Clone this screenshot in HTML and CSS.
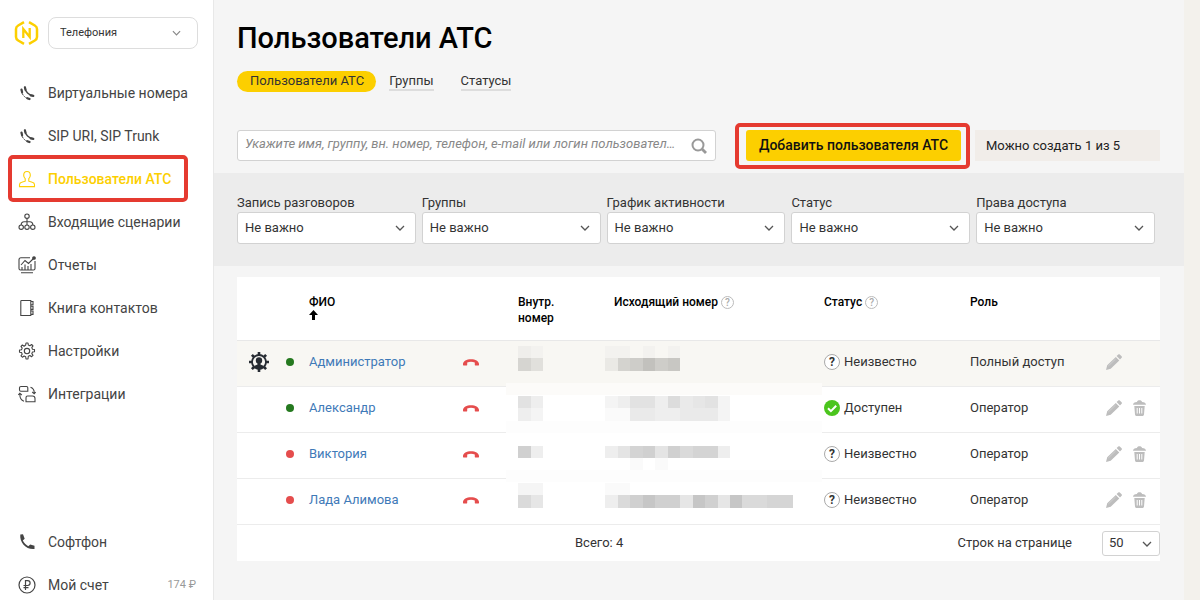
FILE: index.html
```html
<!DOCTYPE html>
<html lang="ru">
<head>
<meta charset="utf-8">
<title>Пользователи АТС</title>
<link rel="stylesheet" href="styles.css">
</head>
<body>
<svg class="defs" aria-hidden="true">
  <symbol id="chevron" viewBox="0 0 10 6"><path d="M1 1l4 4 4-4" fill="none" stroke="currentColor" stroke-width="1.3"/></symbol>
  <symbol id="call" viewBox="0 0 18 18"><path d="M2.300 1.500L5 1.200l1.700 4.500-1.900 1.900c1.300 2.600 3 4.300 5.500 5.600l1.900-1.700 4.300 1.300v3.200c-8 1-15.200-6.200-14.200-14.500z" fill="currentColor"/></symbol>
  <symbol id="numbers" viewBox="0 0 18 18"><g fill="none" stroke="currentColor" stroke-linecap="round"><path d="M3.400 5.500c-.3 4.500 3.700 9 8.200 9.700" stroke-width="1" stroke-dasharray="2 1.500"/><path d="M3.500 5.600l.6 2.600M9.300 14.200l2.300.8" stroke-width="2.200"/><path d="M7 3.200c.2 4.500 3.800 8 8.300 8.400" stroke-width="1.400"/><path d="M6.900 3.300l.6 2.500M12.700 11.300l2.600.5" stroke-width="2.200"/></g></symbol>
  <symbol id="hangup" viewBox="0 0 16 7"><path d="M0 5.200C0 2.300 3.700.3 8 .3s8 2 8 4.900v.9c0 .3-.2.500-.5.500h-3.200c-.3 0-.5-.2-.5-.5V3.600C9.500 2.300 6.500 2.300 4.200 3.600v2.500c0 .3-.2.500-.5.500H.5c-.3 0-.5-.2-.5-.5z" fill="currentColor"/></symbol>
  <symbol id="pencil" viewBox="0 0 16 16"><path d="M0 16l1.200-4.800 8.600-8.300 3.500 3.500-8.600 8.300zM10.600 2.100L12.300.5c.5-.5 1-.5 1.500 0l1.800 1.800c.5.5.5 1 0 1.500L14 5.500z" fill="currentColor"/><path d="M2.300 12l7.300-7" stroke="#dcdcdc" stroke-width=".6"/></symbol>
  <symbol id="trash" viewBox="0 0 13 16"><path d="M4 2c0-2.400 5-2.400 5 0 2.500.3 4 1 4 2.800H0C0 3 1.500 2.300 4 2zM1.300 6h10.400l-.7 8.500c-.1.900-.7 1.500-1.600 1.500H3.600c-.9 0-1.500-.6-1.600-1.500z" fill="currentColor"/><path d="M4.200 8v5.500M6.500 8v5.500M8.800 8v5.500" stroke="#fff" stroke-width="1"/></symbol>
</svg>

<aside class="sidebar">
  <div class="brand">
    <svg class="logo" viewBox="0 0 26 26" fill="none" stroke="#fccf00" stroke-width="2.500" aria-label="Логотип"><path d="M10 2.200L4.200 5.500Q2 6.800 2 9v8q0 2.200 2.200 3.500L10 23.800M15 2.200l5.800 3.300Q23 6.800 23 9v8q0 2.200-2.200 3.500L15 23.800"/><path d="M9.300 18V9l6.400 8V8" stroke-width="2.300"/></svg>
    <div class="select product">
      <select aria-label="Продукт"><option>Телефония</option></select>
      <svg><use href="#chevron"/></svg>
    </div>
  </div>
  <nav class="nav">
    <a href="#"><svg><use href="#numbers"/></svg>Виртуальные номера</a>
    <a href="#"><svg><use href="#numbers"/></svg>SIP URI, SIP Trunk</a>
    <a href="#" class="active highlight" aria-current="page"><svg viewBox="0 0 18 18" fill="none" stroke="currentColor" stroke-width="1.100"><path d="M9 1.500c-2.200 0-3.300 1.500-3.300 3.700 0 1.500.6 2.700 1.500 3.500v2.500l-3.500 1.100c-1.400.4-2.200 1-2.200 2.400v1.900h15v-1.900c0-1.400-.8-2-2.200-2.400l-3.500-1.100V8.700c.9-.8 1.500-2 1.500-3.500 0-2.200-1.100-3.700-3.300-3.700z"/></svg>Пользователи АТС</a>
    <a href="#"><svg viewBox="0 0 18 18" fill="none" stroke="currentColor" stroke-width="1.100"><circle cx="9" cy="3.200" r="2.200"/><circle cx="3.200" cy="14.200" r="2.200"/><circle cx="9" cy="14.200" r="2.200"/><circle cx="14.800" cy="14.200" r="2.200"/><path d="M9 5.400V12M3.200 12c0-2 .8-3.200 3-3.200h5.600c2.200 0 3 1.200 3 3.200"/></svg>Входящие сценарии</a>
    <a href="#"><svg viewBox="0 0 18 18" fill="none" stroke="currentColor" stroke-width="1.100"><path d="M12 1.700H3q-2 0-2 2v8.800q0 1.500 1.500 1.500h13q1.500 0 1.500-1.500V5M3 16.800h12M3 9l4-4.500 3.500 3 5-5"/><circle cx="16" cy="2" r="1.300" fill="currentColor"/><path d="M4 14v-3M7 14V8.500M10 14v-4M13 14V8"/></svg>Отчеты</a>
    <a href="#"><svg viewBox="0 0 18 18" fill="none" stroke="currentColor" stroke-width="1.100"><path d="M3.500 1.500h9.300v15H2.800V2.200q0-.7.700-.7z"/><path d="M13 2.500h2v3.200h-2M13 7.200h2v3.200h-2M13 12h2v3.400h-2"/></svg>Книга контактов</a>
    <a href="#"><svg viewBox="0 0 18 18" fill="none" stroke="currentColor" stroke-width="1.100" stroke-linejoin="round"><path d="M7.700 3L8 1h2l.3 2 1.600.7 1.700-1.200 1.400 1.400-1.200 1.700.7 1.600 2 .3v2.200l-2 .3-.7 1.600 1.200 1.700-1.400 1.400-1.700-1.200-1.600.7L10 17H8l-.3-2.300-1.600-.7-1.700 1.200L3 13.800l1.200-1.700-.7-1.600-2-.3V8l2-.3.700-1.600L3 4.400 4.400 3l1.700 1.200z"/><circle cx="9" cy="9.100" r="2.700"/></svg>Настройки</a>
    <a href="#"><svg viewBox="0 0 18 18" fill="none" stroke="currentColor" stroke-width="1.100"><path d="M3 1.500h5.500q1.300 0 1.300 1.300v3.400H2.800Q1.500 6.200 1.500 5V2.800Q1.500 1.500 3 1.500zM9.500 11h5q2.500 0 2.500 2.500v3.200H8v-4q0-1.700 1.500-1.700zM12.500 2.200q4 1.300 3.700 6M14.200 7l2 1.800L17.700 7M1.800 9q0 6 4.200 7.200M.2 10l1.600-1.800L3.800 10"/></svg>Интеграции</a>
  </nav>
  <nav class="nav nav-bottom">
    <a href="#"><svg><use href="#call"/></svg>Софтфон</a>
    <a href="#"><svg viewBox="0 0 18 18" fill="none" stroke="currentColor" stroke-width="1.200"><circle cx="9" cy="9" r="8"/><path d="M7.500 14V4.700h2.200a2.400 2.400 0 0 1 0 4.800H5.500M5.500 11.600h5"/></svg>Мой счет<span class="balance">174 ₽</span></a>
  </nav>
</aside>

<main class="main">
  <header class="head">
    <h1>Пользователи АТС</h1>
    <nav class="tabs">
      <a href="#" class="current">Пользователи АТС</a>
      <a href="#">Группы</a>
      <a href="#">Статусы</a>
    </nav>
    <div class="actions">
      <form class="search">
        <input type="text" aria-label="Поиск" placeholder="Укажите имя, группу, вн. номер, телефон, e-mail или логин пользовател…">
        <button type="button" aria-label="Найти"><svg viewBox="0 0 16 16" fill="none" stroke="#999"><circle cx="7" cy="7" r="5.500" stroke-width="2"/><path d="M11 11l4 4" stroke-width="2.800"/></svg></button>
      </form>
      <div class="add highlight"><button type="button">Добавить пользователя АТС</button></div>
      <p class="limit">Можно создать 1 из 5</p>
    </div>
  </header>

  <section class="filters">
    <div class="filter"><label for="f1">Запись разговоров</label><div class="select"><select id="f1"><option>Не важно</option></select><svg><use href="#chevron"/></svg></div></div>
    <div class="filter"><label for="f2">Группы</label><div class="select"><select id="f2"><option>Не важно</option></select><svg><use href="#chevron"/></svg></div></div>
    <div class="filter"><label for="f3">График активности</label><div class="select"><select id="f3"><option>Не важно</option></select><svg><use href="#chevron"/></svg></div></div>
    <div class="filter"><label for="f4">Статус</label><div class="select"><select id="f4"><option>Не важно</option></select><svg><use href="#chevron"/></svg></div></div>
    <div class="filter"><label for="f5">Права доступа</label><div class="select"><select id="f5"><option>Не важно</option></select><svg><use href="#chevron"/></svg></div></div>
  </section>

  <section class="card">
    <table class="users">
      <colgroup><col class="c-owner"><col class="c-dot"><col class="c-name"><col class="c-call"><col class="c-ext"><col class="c-out"><col class="c-status"><col class="c-role"><col class="c-tools"></colgroup>
      <thead>
        <tr>
          <th></th><th></th>
          <th>ФИО<svg class="sort" viewBox="0 0 9 10"><path d="M4.500 0L9 5H6v5H3V5H0z"/></svg></th>
          <th></th>
          <th>Внутр.<br>номер</th>
          <th>Исходящий номер <span class="hint">?</span></th>
          <th>Статус <span class="hint">?</span></th>
          <th>Роль</th>
          <th></th>
        </tr>
      </thead>
      <tbody>
        <tr class="owner">
          <td><svg class="gear" viewBox="0 0 20 20"><g stroke="#272c33" stroke-width="2.600"><path d="M10 0v3M10 17v3M0 10h3M17 10h3M2.900 2.900L5 5M15 15l2.100 2.100M2.900 17.100L5 15M15 5l2.100-2.100"/></g><circle cx="10" cy="10" r="7" fill="none" stroke="#272c33" stroke-width="1.800"/><circle cx="10" cy="8.500" r="3.200" fill="#272c33"/><path d="M8.500 10h3v2.500l3.500 1.500-2.500 2.800h-5L5 14l3.500-1.500z" fill="#272c33"/></svg></td>
          <td><span class="dot on"></span></td>
          <td><a href="#">Администратор</a></td>
          <td><svg class="hangup"><use href="#hangup"/></svg></td>
          <td></td><td></td>
          <td><span class="state"><span class="unknown">?</span>Неизвестно</span></td>
          <td>Полный доступ</td>
          <td><div class="tools"><button type="button" aria-label="Изменить"><svg class="pencil"><use href="#pencil"/></svg></button></div></td>
        </tr>
        <tr>
          <td></td>
          <td><span class="dot on"></span></td>
          <td><a href="#">Александр</a></td>
          <td><svg class="hangup"><use href="#hangup"/></svg></td>
          <td></td><td></td>
          <td><span class="state"><svg class="ok" viewBox="0 0 16 16"><circle cx="8" cy="8" r="8" fill="#4bc51d"/><path d="M4 8.200l2.900 2.900 5.300-5.300" fill="none" stroke="#fff" stroke-width="2"/></svg>Доступен</span></td>
          <td>Оператор</td>
          <td><div class="tools"><button type="button" aria-label="Изменить"><svg class="pencil"><use href="#pencil"/></svg></button><button type="button" aria-label="Удалить"><svg class="trash"><use href="#trash"/></svg></button></div></td>
        </tr>
        <tr>
          <td></td>
          <td><span class="dot off"></span></td>
          <td><a href="#">Виктория</a></td>
          <td><svg class="hangup"><use href="#hangup"/></svg></td>
          <td></td><td></td>
          <td><span class="state"><span class="unknown">?</span>Неизвестно</span></td>
          <td>Оператор</td>
          <td><div class="tools"><button type="button" aria-label="Изменить"><svg class="pencil"><use href="#pencil"/></svg></button><button type="button" aria-label="Удалить"><svg class="trash"><use href="#trash"/></svg></button></div></td>
        </tr>
        <tr>
          <td></td>
          <td><span class="dot off"></span></td>
          <td><a href="#">Лада Алимова</a></td>
          <td><svg class="hangup"><use href="#hangup"/></svg></td>
          <td></td><td></td>
          <td><span class="state"><span class="unknown">?</span>Неизвестно</span></td>
          <td>Оператор</td>
          <td><div class="tools"><button type="button" aria-label="Изменить"><svg class="pencil"><use href="#pencil"/></svg></button><button type="button" aria-label="Удалить"><svg class="trash"><use href="#trash"/></svg></button></div></td>
        </tr>
      </tbody>
    </table>
    <svg class="mosaic" viewBox="0 0 316 162" shape-rendering="crispEdges" aria-hidden="true">
      <path fill="#fcfbf9" d="M0 37h316v12H0z"/><path fill="#fdfdfd" d="M0 75h316v12H0zM0 124h316v12H0z"/>
      <path fill="#efeeeb" d="M12 0h13v12H12z"/><path fill="#f3f2ef" d="M25 0h12v12H25zM99 0h25v12H99zM137 0h12v12h-12zM162 0h12v12h-12z"/>
      <path fill="#d6d5d1" d="M12 12h13v13H12z"/><path fill="#e1e0dc" d="M25 12h12v13H25z"/><path fill="#eae9e5" d="M99 12h13v13H99z"/><path fill="#d4d3cf" d="M112 12h12v13h-12z"/><path fill="#cecdc9" d="M124 12h13v13h-13zM149 12h13v13h-13z"/><path fill="#c2c1bd" d="M137 12h12v13h-12z"/><path fill="#c8c7c3" d="M162 12h12v13h-12z"/>
      <path fill="#e2e2e2" d="M12 50h13v12H12zM124 50h13v12h-13zM137 50h12v12h-12zM199 50h13v12h-13z"/><path fill="#eee" d="M25 50h12v12H25zM12 62h13v13H12zM112 50h12v12h-12zM149 50h13v12h-13zM149 62h25v13h-25z"/><path fill="#f4f4f4" d="M25 62h12v13H25zM99 50h13v12H99zM212 50h12v25h-12z"/><path fill="#fafafa" d="M99 62h25v13H99z"/><path fill="#dcdcdc" d="M162 50h12v12h-12z"/><path fill="#eaeaea" d="M174 50h13v25h-13zM187 62h25v13h-25zM124 62h25v13h-25z"/><path fill="#e6e6e6" d="M187 50h12v12h-12z"/>
      <path fill="#d0d0d0" d="M12 100h13v12H12zM137 100h12v12h-12zM162 100h12v12h-12z"/><path fill="#eee" d="M25 100h12v12H25zM99 100h13v12H99zM212 100h12v12h-12z"/><path fill="#e4e4e4" d="M112 100h12v12h-12zM149 100h13v12h-13z"/><path fill="#d4d4d4" d="M124 100h13v12h-13zM187 100h25v12h-25z"/><path fill="#dadada" d="M174 100h13v12h-13z"/><path fill="#fafafa" d="M124 112h13v12h-13zM149 112h13v12h-13zM99 137h25v12H99z"/>
      <path fill="#f5f5f5" d="M12 137h25v12H12z"/><path fill="#dadada" d="M12 149h13v13H12zM112 149h12v13h-12zM236 149h25v13h-25z"/><path fill="#e6e6e6" d="M25 149h12v13H25zM174 149h13v13h-13zM212 149h12v13h-12z"/><path fill="#eee" d="M99 149h13v13H99z"/><path fill="#d0d0d0" d="M124 149h13v13h-13zM149 149h25v13h-25zM199 149h13v13h-13z"/><path fill="#c6c6c6" d="M137 149h12v13h-12zM187 149h12v13h-12zM224 149h12v13h-12z"/><path fill="#d5d5d5" d="M261 149h26v13h-26z"/>
    </svg>
    <footer class="foot">
      <span class="total">Всего: 4</span>
      <label for="rows">Строк на странице</label>
      <div class="select rows"><select id="rows"><option>50</option></select><svg><use href="#chevron"/></svg></div>
    </footer>
  </section>
</main>
</body>
</html>
```
FILE: styles.css
```css
* { box-sizing: border-box; }

body {
  margin: 0;
  min-height: 100vh;
  display: flex;
  padding-right: 16px;
  background: #f3f1ec;
  color: #333;
  font: 13px/16px Roboto, "Noto Sans", sans-serif;
}

a { color: inherit; text-decoration: none; }
button { border: 0; padding: 0; background: none; font: inherit; color: inherit; }
svg { flex: none; display: block; }
.defs { position: absolute; width: 0; height: 0; }

/* Sidebar */
.sidebar {
  flex: none;
  width: 214px;
  display: flex;
  flex-direction: column;
  background: #fff;
  border-right: 1px solid #e8e8e8;
  padding-top: 17px;
}
.brand { display: flex; align-items: center; gap: 8px; padding: 0 15px 0 14px; }
.logo { width: 26px; height: 26px; }
.nav { display: flex; flex-direction: column; padding: 22px 8px 0; }
.nav a {
  position: relative;
  display: flex;
  align-items: center;
  gap: 12px;
  height: 43px;
  padding: 0 9px 0 10px;
  font-size: 14px;
  color: #444;
}
.nav svg { width: 18px; height: 18px; }
.nav .active { color: #fccf00; font-weight: 500; }
.nav-bottom { margin-top: auto; padding-top: 0; margin-bottom: -6px; }
.nav .balance { margin-left: auto; font-size: 11px; color: #999; }

.highlight { position: relative; }
.highlight::after {
  content: "";
  position: absolute;
  inset: -2px 18px -2px 0;
  border: 4px solid #e53a30;
  border-radius: 5px;
  pointer-events: none;
}
.nav .highlight::after { right: 17px; }

/* Selects */
.select { position: relative; }
.select select {
  appearance: none;
  display: block;
  width: 100%;
  height: 32px;
  padding: 0 30px 1px 7px;
  border: 1px solid #d2d2d2;
  border-radius: 3px;
  background: #fff;
  font: inherit;
  color: #333;
}
.select svg {
  position: absolute;
  right: 11px;
  top: 13px;
  width: 10px;
  height: 6px;
  color: #555;
  pointer-events: none;
}
.product { flex: 1; font-size: 11px; }
.product select { padding: 0 30px 0 11px; border-color: #ddd; border-radius: 8px; }
.product svg { right: 17px; width: 9px; color: #888; }

/* Page */
.main { flex: 1; min-width: 0; background: #f5f5f5; }
.head { padding: 18px 24px 12px 23px; }
h1 { margin: 0; font-size: 29px; line-height: 40px; font-weight: 500; color: #000; }
.tabs { display: flex; align-items: center; gap: 27px; margin-top: 13px; }
.tabs a { border-bottom: 2px solid #ddd; line-height: 17px; }
.tabs .current {
  margin-right: -14px;
  padding: 0 12px 1px 13px;
  border: 0;
  border-radius: 11px;
  line-height: 20px;
  background: #fccf00;
}

.actions { display: flex; margin-top: 38px; }
.search {
  flex: 1;
  display: flex;
  height: 31px;
  border: 1px solid #d2d2d2;
  border-radius: 3px;
  background: #fff;
}
.search input {
  flex: 1;
  min-width: 0;
  border: 0;
  padding: 0 8px 3px 7px;
  background: none;
  font: inherit;
  font-style: italic;
  text-overflow: ellipsis;
}
.search input::placeholder { color: #888; }
.search button { width: 31px; padding-left: 7px; }
.search svg { width: 16px; height: 16px; }
.add { margin: 0 14px 0 30px; }
.add::after { inset: -7px -9px -8px -11px; }
.add button {
  width: 215px;
  height: 31px;
  padding-bottom: 1px;
  border-radius: 3px;
  background: #fccf00;
  font-size: 14px;
  font-weight: 500;
  color: #111;
}
.limit { width: 185px; margin: 0; padding: 0 11px; line-height: 31px; background: #f1ede9; color: #222; }

.filters { display: flex; gap: 6px; padding: 20px 29px 22px 23px; background: #ececec; }
.filter { flex: 1; }
.filter label { display: block; line-height: 19px; }

/* Users table */
.card { position: relative; margin: 11px 24px 39px 23px; background: #fff; }
.users { width: 100%; table-layout: fixed; border-collapse: separate; border-spacing: 0; }
.c-owner { width: 43px; }
.c-dot { width: 29px; }
.c-call { width: 55px; }
.c-name { width: 154px; }
.c-ext { width: 96px; }
.c-out { width: 210px; }
.c-status { width: 146px; }
.c-tools { width: 54px; }
.users th {
  height: 64px;
  padding: 17px 0 0;
  border-bottom: 1px solid #e8e8e8;
  text-align: left;
  vertical-align: top;
  font-size: 12px;
  font-weight: 500;
  color: #000;
}
.users td { height: 46px; padding: 0 0 3px; border-bottom: 1px solid #ececec; }
.owner td { background: #f8f7f3; }
.users a { color: #3f7ab8; }
.sort { width: 9px; height: 10px; }
.gear { width: 20px; height: 20px; margin-left: 12px; }
.dot { display: block; width: 8px; height: 8px; margin-left: 6px; border-radius: 50%; }
.on { background: #25791f; }
.off { background: #e54d4d; }
.hangup { width: 16px; height: 7px; color: #e54d4d; }
.hint {
  display: inline-block;
  width: 13px;
  height: 13px;
  border: 1px solid #bbb;
  border-radius: 50%;
  text-align: center;
  font-size: 10px;
  line-height: 11px;
  color: #aaa;
}
.state { display: flex; align-items: center; gap: 4px; }
.ok { width: 16px; height: 16px; }
.unknown {
  width: 16px;
  height: 16px;
  border: 1px solid #aaa;
  border-radius: 50%;
  background: #fff;
  text-align: center;
  font-size: 12px;
  line-height: 14px;
  font-weight: 700;
}
.tools { display: flex; gap: 11px; color: #bdbdbd; }
.pencil { width: 16px; height: 16px; }
.trash { width: 13px; height: 16px; }
.mosaic { position: absolute; left: 269px; top: 69px; width: 316px; height: 162px; }

.foot { display: flex; align-items: center; height: 36px; }
.total { flex: 1; padding-left: 338px; }
.rows { width: 58px; margin-left: 30px; }
.rows select { height: 25px; padding: 0 20px 0 6px; }
.rows svg { right: 8px; top: 10px; }
```
